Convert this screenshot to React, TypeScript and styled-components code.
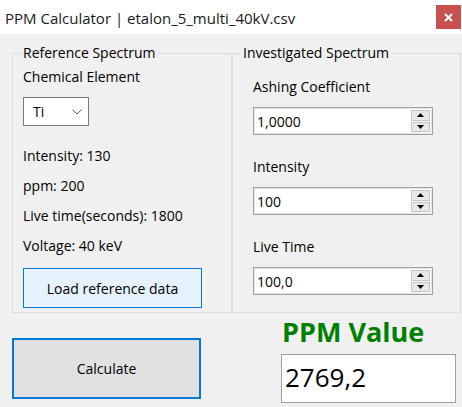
import React from 'react';
import styled, { createGlobalStyle } from 'styled-components';

const Global = createGlobalStyle`
  html, body { margin: 0; padding: 0; background: #f0f0f0; }
  * { box-sizing: border-box; }
`;

const FONT = `"Open Sans", "Noto Sans", sans-serif`;

const Window = styled.div`
  width: 462px;
  height: 407px;
  background: #f0f0f0;
  overflow: hidden;
  display: flex;
  flex-direction: column;
  font-family: ${FONT};
  font-size: 14px;
  color: #000;
`;

const TitleBar = styled.div`
  height: 34px;
  background: #fff;
  display: flex;
  justify-content: space-between;
  align-items: flex-start;
  padding-left: 5px;
`;

const TitleText = styled.div`
  font-size: 15px;
  line-height: 36px;
  color: #1a1a1a;
`;

const CloseButton = styled.div`
  width: 25px;
  height: 24px;
  margin-top: 5px;
  margin-right: 1px;
  background: #c75050;
  display: flex;
  align-items: center;
  justify-content: center;
`;

const Content = styled.div`
  padding: 11px 1px 0 12px;
  display: flex;
  flex-direction: column;
`;

const GroupsRow = styled.div`
  display: flex;
`;

const Group = styled.fieldset<{ $w: number }>`
  margin: 0;
  padding: 0;
  min-width: 0;
  width: ${p => p.$w}px;
  height: 268px;
  border: 1px solid #dcdcdc;
`;

const Legend = styled.legend`
  margin-left: 8px;
  padding: 0 2px;
  font-size: 14px;
  line-height: 16px;
`;

const GroupBody = styled.div<{ $pl: number; $pt: number }>`
  padding: ${p => p.$pt}px 0 0 ${p => p.$pl}px;
  display: flex;
  flex-direction: column;
  align-items: flex-start;
`;

const FieldLabel = styled.div`
  line-height: 18px;
  margin-bottom: 11px;
`;

const InfoRow = styled.div`
  line-height: 30px;
`;

const Combo = styled.div`
  width: 66px;
  height: 29px;
  background: #fff;
  border: 1px solid #7a7a7a;
  display: flex;
  align-items: center;
  justify-content: space-between;
  padding: 0 6px 0 9px;
  margin-bottom: 15px;
`;

const LoadButton = styled.div`
  margin-top: 7px;
  width: 179px;
  height: 40px;
  background: #e5f1fb;
  border: 1px solid #0078d7;
  display: flex;
  align-items: center;
  justify-content: center;
`;

const NumBox = styled.div`
  width: 180px;
  height: 28px;
  background: #fff;
  border: 1px solid #a0a0a0;
  box-shadow: inset 0 0 0 1px #e6e6e6;
  display: flex;
  align-items: stretch;
  margin-bottom: 23px;
`;

const NumValue = styled.div`
  flex: 1;
  padding-left: 3px;
  display: flex;
  align-items: center;
`;

const Spin = styled.div`
  width: 22px;
  display: flex;
  flex-direction: column;
  gap: 1px;
  padding: 2px 2px 2px 1px;
`;

const SpinButton = styled.div`
  flex: 1;
  background: #e8e8e8;
  border: 1px solid #c4c4c4;
  display: flex;
  align-items: center;
  justify-content: center;
`;

const BottomRow = styled.div`
  display: flex;
  align-items: flex-start;
`;

const CalcButton = styled.div`
  margin-top: 25px;
  width: 189px;
  height: 61px;
  background: #e1e1e1;
  border: 2px solid #0078d7;
  display: flex;
  align-items: center;
  justify-content: center;
`;

const ResultColumn = styled.div`
  margin-left: 80px;
  padding-top: 3px;
  display: flex;
  flex-direction: column;
`;

const ResultTitle = styled.div`
  color: #008000;
  font-weight: 700;
  font-size: 27px;
  line-height: 32px;
  padding-left: 1px;
`;

const ResultBox = styled.div`
  margin-top: 6px;
  width: 175px;
  height: 49px;
  background: #fff;
  border: 1px solid #a0a0a0;
  font-size: 26px;
  line-height: 45px;
  padding-left: 3px;
`;

const Triangle = ({ up }: { up?: boolean }) => (
  <svg width="7" height="4" viewBox="0 0 7 4">
    <path d={up ? 'M0 4 L3.5 0 L7 4 Z' : 'M0 0 L3.5 4 L7 0 Z'} fill="#000" />
  </svg>
);

const Chevron = () => (
  <svg width="10" height="6" viewBox="0 0 10 6">
    <path d="M0.5 0.5 L5 5 L9.5 0.5" fill="none" stroke="#606060" strokeWidth="1" />
  </svg>
);

const CloseIcon = () => (
  <svg width="9" height="9" viewBox="0 0 9 9">
    <path d="M1 1 L8 8 M8 1 L1 8" stroke="#fff" strokeWidth="2" />
  </svg>
);

const NumericInput = ({ value }: { value: string }) => (
  <NumBox>
    <NumValue>{value}</NumValue>
    <Spin>
      <SpinButton><Triangle up /></SpinButton>
      <SpinButton><Triangle /></SpinButton>
    </Spin>
  </NumBox>
);

export default function App() {
  return (
    <Window>
      <Global />
      <TitleBar>
        <TitleText>PPM Calculator | etalon_5_multi_40kV.csv</TitleText>
        <CloseButton><CloseIcon /></CloseButton>
      </TitleBar>
      <Content>
        <GroupsRow>
          <Group $w={220}>
            <Legend>Reference Spectrum</Legend>
            <GroupBody $pl={10} $pt={7}>
              <FieldLabel>Chemical Element</FieldLabel>
              <Combo>
                <span>Ti</span>
                <Chevron />
              </Combo>
              <InfoRow>Intensity: 130</InfoRow>
              <InfoRow>ppm: 200</InfoRow>
              <InfoRow>Live time(seconds): 1800</InfoRow>
              <InfoRow>Voltage: 40 keV</InfoRow>
              <LoadButton>Load reference data</LoadButton>
            </GroupBody>
          </Group>
          <Group $w={229}>
            <Legend>Investigated Spectrum</Legend>
            <GroupBody $pl={20} $pt={17}>
              <FieldLabel>Ashing Coefficient</FieldLabel>
              <NumericInput value="1,0000" />
              <FieldLabel>Intensity</FieldLabel>
              <NumericInput value="100" />
              <FieldLabel>Live Time</FieldLabel>
              <NumericInput value="100,0" />
            </GroupBody>
          </Group>
        </GroupsRow>
        <BottomRow>
          <CalcButton>Calculate</CalcButton>
          <ResultColumn>
            <ResultTitle>PPM Value</ResultTitle>
            <ResultBox>2769,2</ResultBox>
          </ResultColumn>
        </BottomRow>
      </Content>
    </Window>
  );
}
